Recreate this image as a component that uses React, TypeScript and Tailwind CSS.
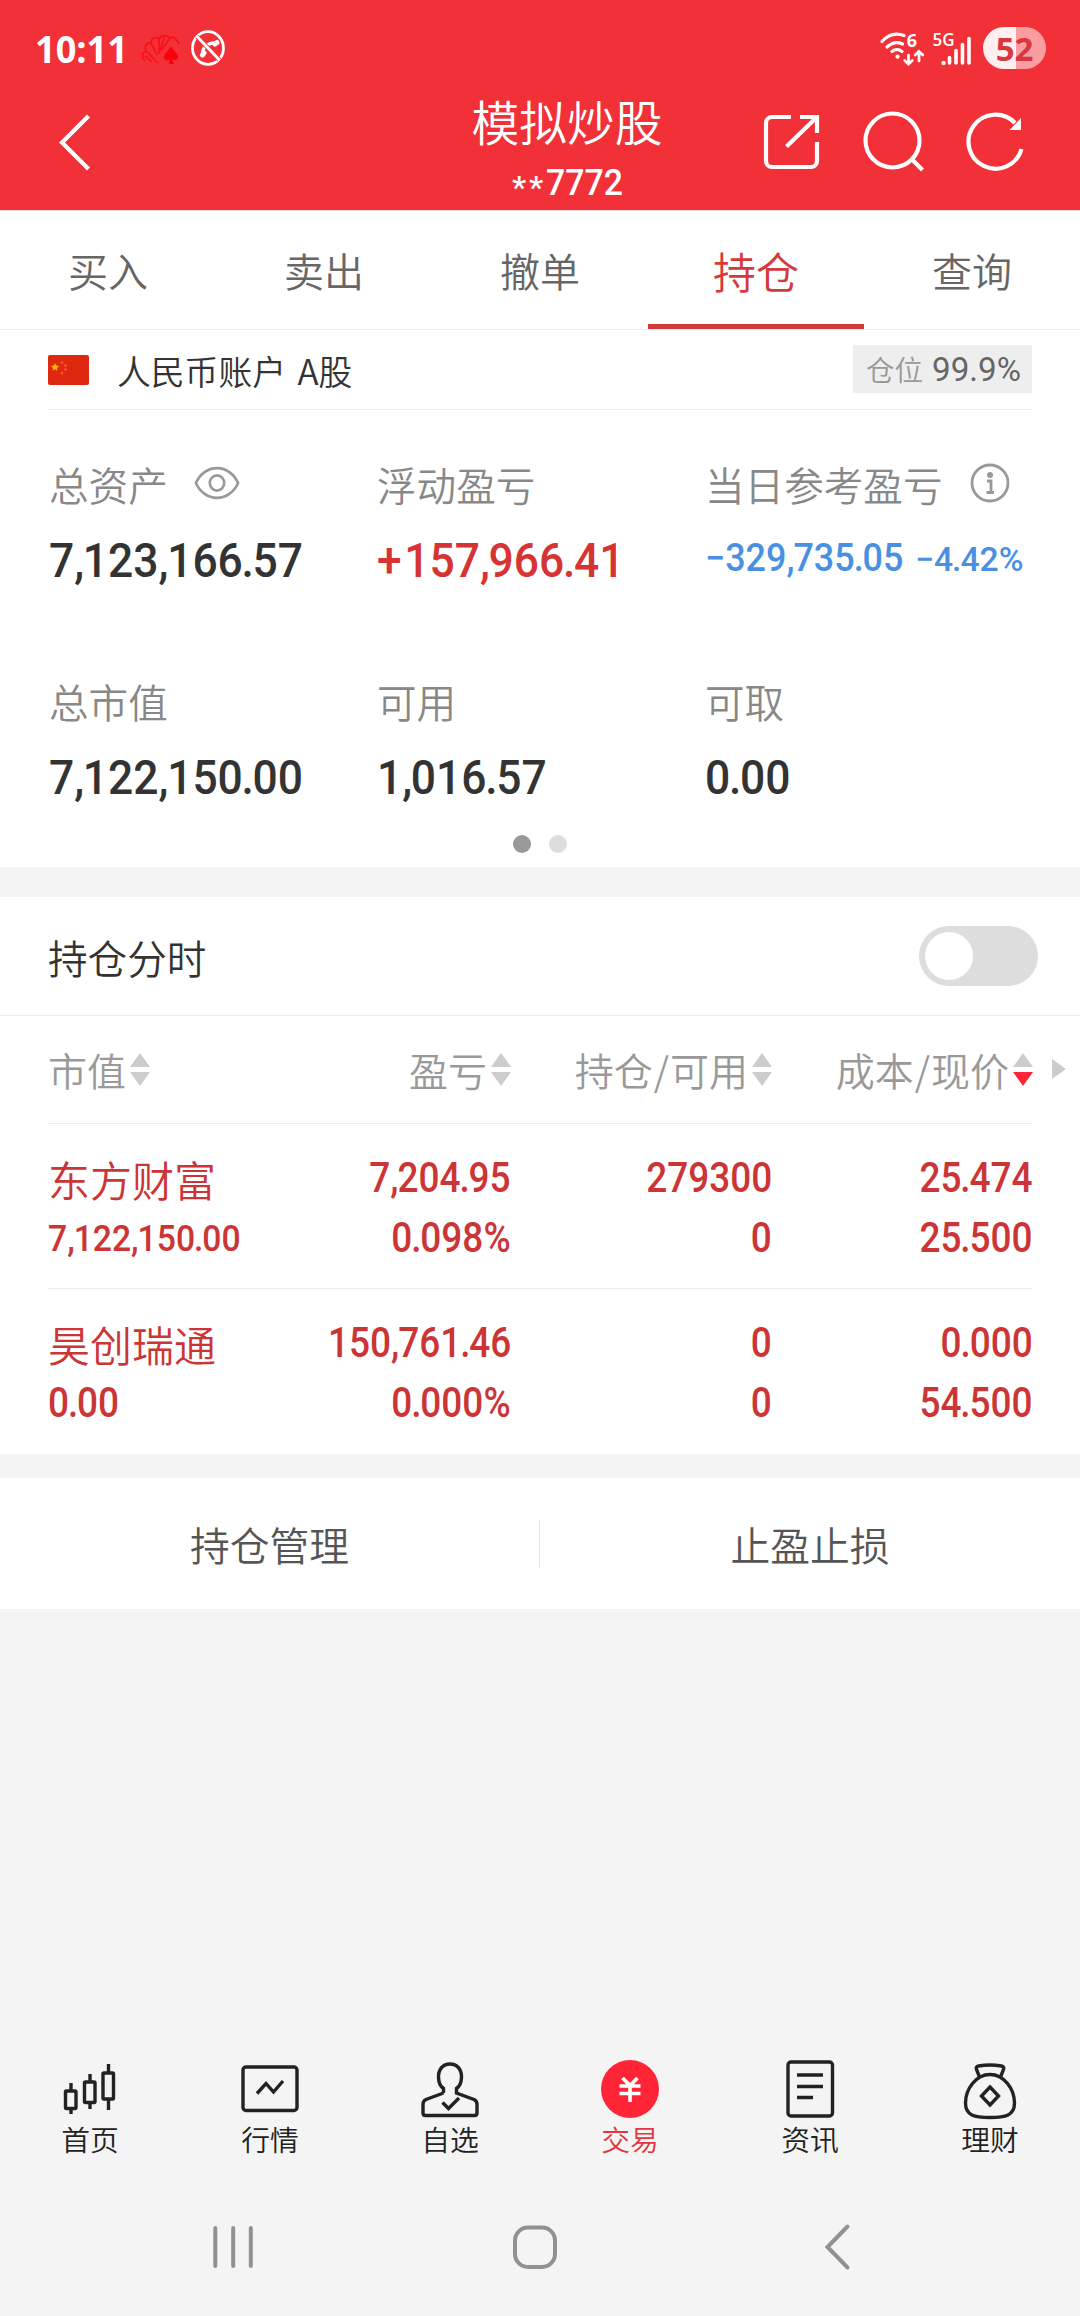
import React from 'react';

const cjk = "font-['Noto_Sans_CJK_SC',sans-serif] font-[350]";

type NumProps = { text: string; className?: string };

/* Figures with tightened separators. */
function Figures({ text }: { text: string }) {
  return (
    <>
      {text.split('').map((c, i) =>
        c === ',' ? <span key={i} className="mr-[-0.03em]">,</span>
        : c === '.' ? <span key={i} className="ml-[-0.03em] mr-[-0.03em]">.</span>
        : c === '+' ? <span key={i} className="mr-[0.06em]">+</span>
        : c,
      )}
    </>
  );
}

/* Condensed figures, anchored to the left or right edge of their cell. */
function NumL({ text, className = '' }: NumProps) {
  return <span className={`block w-max origin-left whitespace-nowrap font-['Roboto',sans-serif] font-medium ${className}`}><Figures text={text} /></span>;
}
function NumR({ text, className = '' }: NumProps) {
  return <span className={`ml-auto block w-max origin-right scale-x-[0.88] whitespace-nowrap font-['Roboto',sans-serif] text-[42px] font-medium leading-[60px] ${className}`}><Figures text={text} /></span>;
}

function StatusBar() {
  return (
    <div className="flex h-[96px] items-center justify-between pl-[35px] pr-[34px]">
      <div className="flex items-center">
        <div className="w-[107px]">
          <span className="block w-max origin-left scale-x-[0.95] whitespace-nowrap font-['Open_Sans',sans-serif] text-[38px] font-bold leading-none text-white">10:11</span>
        </div>
        <svg className="h-[36px] w-[40px]" viewBox="0 0 40 36" fill="none" stroke="#fb0d14" strokeWidth="1.600">
          <path d="M3 31C-1 27 0 22 4 21C2 16 5 12 9 13C9 8 13 6 17 9C19 5 25 5 28 8C31 6 35 9 37 14" />
          <path d="M4 21l12 12M3 26l7 6M9 13l6 12M17 9l0 15M28 8l-8 12M22 8l-4 13" />
          <path d="M29 16c-3 6-8 8-7 12 1 3 5 3 6 1l-1 5h5l-2-5c2 2 6 1 6-2 0-4-5-6-7-11z" fill="#fb0008" stroke="none" />
        </svg>
        <svg className="ml-[9px] h-[36px] w-[34px]" viewBox="0 0 34 36" fill="none" stroke="#fff">
          <ellipse cx="17" cy="18" rx="15.500" ry="16.300" strokeWidth="2.800" />
          <path d="M11.500 25C11 17.500 17 12 26 13" strokeWidth="3.400" />
          <path d="M11.500 25l1.500-2M24 14l2-1.500" strokeWidth="5" strokeLinecap="round" />
          <path d="M6 6.500l22.500 23.500" stroke="#f13038" strokeWidth="4.600" />
          <path d="M6 6.500l22.500 23.500" strokeWidth="2.800" />
        </svg>
      </div>
      <div className="flex items-center">
        <svg className="h-[36px] w-[96px] overflow-visible" viewBox="0 0 96 36" fill="none" stroke="#fff" strokeWidth="3.200" strokeLinecap="round">
          <path d="M4 11.500c6-7 14-9 22-6M9 17c5-4.500 10-5.500 15.500-3M14 21.500c3-2.500 7-2.500 10 0" />
          <circle cx="19.500" cy="26.700" r="2.100" fill="#fff" stroke="none" />
          <path d="M30.500 25v9m-3.800-3.500l3.800 3.700 3.800-3.700M41 31v-9m-3.800 3l3.800-3.700 3.800 3.700" strokeWidth="2.700" />
          <text x="28.800" y="16.800" fontSize="18" fontWeight="700" fontFamily="Open Sans" fill="#fff" stroke="none">6</text>
          <text x="54.500" y="15.800" fontSize="18" fontWeight="600" fontFamily="Open Sans" fill="#fff" stroke="none" textLength="22" lengthAdjust="spacingAndGlyphs">5G</text>
          <circle cx="65.500" cy="33" r="2.200" fill="#fff" stroke="none" />
          <path d="M71.500 27.500v5.500M78 20.500v12.500M84.500 14.500v18.500M91 8.500v24.500" strokeWidth="3.600" />
        </svg>
        <div className="ml-[9px] flex h-[42px] w-[63px] items-center justify-center rounded-full bg-gradient-to-r from-[#ffeff0] from-[52%] to-[#f99da1] to-[52%]">
          <span className="font-['Open_Sans',sans-serif] text-[33px] font-bold leading-none text-[#da363d]">52</span>
        </div>
      </div>
    </div>
  );
}

function TitleBar() {
  return (
    <div className="grid h-[114px] grid-cols-[400px_1fr_400px] text-white">
      <svg className="ml-[58px] mt-[18px] h-[58px] w-[34px]" viewBox="0 0 34 58" fill="none" stroke="#fff" strokeWidth="4.200">
        <path d="M30.500 2L4 28.500l26.500 26.500" />
      </svg>
      <div className="flex flex-col items-center">
        <div className={`${cjk} whitespace-nowrap pl-[54px] text-[47.800px] leading-[49px]`}>模拟炒股</div>
        <div className="flex h-[64px] w-full items-center justify-center pl-[60px] pt-[12px] font-['Roboto',sans-serif] text-[36px] font-medium leading-[48px]">
          <span className="mt-[7px] text-[32px] tracking-[3px]">**</span>
          <span className="origin-left scale-x-[0.94]">7772</span>
        </div>
      </div>
      <svg className="ml-[63px] mt-[14px] h-[64px] w-[290px]" viewBox="744 110 290 64" fill="none" stroke="#fff" strokeWidth="4.200">
        <path d="M792 117h-19a6 6 0 0 0-6 6v38a6 6 0 0 0 6 6h39a6 6 0 0 0 6-6v-19" />
        <path d="M801 117h17v16M817 118l-29.500 28.500" />
        <circle cx="893.500" cy="140.500" r="27" />
        <path d="M912.500 159l11 11" />
        <path d="M1022.500 149A27 27 0 1 1 1016 123" />
        <path d="M1022 118v12h-11.500z" fill="#fff" stroke="none" />
      </svg>
    </div>
  );
}

const tabs = ['买入', '卖出', '撤单', '持仓', '查询'];

function Tabs() {
  return (
    <nav className={`${cjk} grid h-[120px] grid-cols-5 border-b border-[#ececec] border-t border-t-[#ffe2e5] bg-white`}>
      {tabs.map((t) =>
        t === '持仓' ? (
          <div key={t} className="flex justify-center border-b-[5px] border-[#d53a3a] pt-[29px] text-[43px] leading-[60px] text-[#d53a3a]">{t}</div>
        ) : (
          <div key={t} className="flex justify-center pt-[29px] text-[40px] leading-[60px] text-[#666]">{t}</div>
        ),
      )}
    </nav>
  );
}

function Eye() {
  return (
    <svg className="ml-[26px] mt-[-3px] h-[36px] w-[46px]" viewBox="0 0 48 36" fill="none" stroke="#999" strokeWidth="2.800">
      <path d="M2 18C6 9 14 2.500 24 2.500S42 9 46 18C42 27 34 33.500 24 33.500S6 27 2 18z" />
      <ellipse cx="24" cy="18" rx="7.500" ry="8" />
    </svg>
  );
}
function Info() {
  return (
    <svg className="ml-[28px] mt-[-3px] h-[40px] w-[40px]" viewBox="0 0 40 40" fill="none" stroke="#999" strokeWidth="2.800">
      <circle cx="20" cy="20" r="18" />
      <circle cx="20" cy="12" r="3" fill="#999" stroke="none" />
      <path d="M17 18h4v11M16.500 29.500h7.500" />
    </svg>
  );
}

function Metric({ label, icon, children }: { label: string; icon?: React.ReactNode; children: React.ReactNode }) {
  return (
    <div className="h-[217px]">
      <div className={`${cjk} flex h-[60px] items-center whitespace-nowrap text-[39.600px] leading-[60px] text-[#888]`}>
        {label}
        {icon}
      </div>
      <div className="mt-[17px] flex h-[60px] items-center">{children}</div>
    </div>
  );
}

const big = 'scale-x-[0.925] text-[48px] leading-[60px]';

function Account() {
  return (
    <section className="h-[537px] bg-white">
      <div className="mx-[48px] flex h-[80px] items-center border-b border-[#ececec]">
        <svg className="h-[30px] w-[41px]" viewBox="0 0 41 30">
          <rect width="41" height="30" rx="2" fill="#de2910" />
          <path d="M7 8l1.200 2.600 2.800.3-2.100 2 .6 2.800L7 14.300l-2.500 1.400.6-2.800-2.100-2 2.800-.3z" fill="#ffb400" />
          <g fill="#ee6a1c">
            <circle cx="14" cy="7.500" r="1.200" />
            <circle cx="17.500" cy="10.500" r="1.200" />
            <circle cx="17.500" cy="14.500" r="1.200" />
            <circle cx="14" cy="18" r="1.200" />
          </g>
        </svg>
        <div className={`${cjk} ml-[28px] mt-[2px] text-[33.800px] text-[#333] [word-spacing:4px]`}>
          人民币账户 <span className="text-[35px]">A</span>股
        </div>
        <div className={`${cjk} ml-auto mt-[-2px] flex h-[48px] w-[179px] items-center justify-center bg-[#eee] pt-[2px] text-[28.500px] text-[#999]`}>
          仓位<span className="ml-[9px] origin-left scale-x-[1.02] pt-[1px] font-['Roboto',sans-serif] text-[32.500px] font-normal text-[#666]">99.9%</span>
        </div>
      </div>
      <div className="ml-[49px] mt-[44px] grid grid-cols-[328px_328px_1fr]">
        <Metric label="总资产" icon={<Eye />}><NumL text="7,123,166.57" className={`${big} text-[#333]`} /></Metric>
        <Metric label="浮动盈亏"><NumL text="+157,966.41" className={`${big} text-[#d63333]`} /></Metric>
        <Metric label="当日参考盈亏" icon={<Info />}>
          <div className="mt-[-5px] flex items-baseline text-[#4a90e2]">
            <NumL text="−329,735.05" className="w-[211px] scale-x-[0.945] text-[38px]" />
            <NumL text="−4.42%" className="scale-x-[0.99] text-[34px]" />
          </div>
        </Metric>
        <Metric label="总市值"><NumL text="7,122,150.00" className={`${big} text-[#333]`} /></Metric>
        <Metric label="可用"><NumL text="1,016.57" className={`${big} text-[#333]`} /></Metric>
        <Metric label="可取"><NumL text="0.00" className={`${big} text-[#333]`} /></Metric>
      </div>
      <div className="mt-[-53px] flex justify-center gap-[18px]">
        <i className="size-[18px] rounded-full bg-[#999]" />
        <i className="size-[18px] rounded-full bg-[#ddd]" />
      </div>
    </section>
  );
}

function Sort({ active = false }: { active?: boolean }) {
  return (
    <svg className="ml-[4px] h-[34px] w-[20px] shrink-0" viewBox="0 0 20 34">
      <path d="M10 0l10 14H0z" fill="#ccc" />
      <path d="M10 33L0 19h20z" fill={active ? '#ff2436' : '#ccc'} />
    </svg>
  );
}

const rows = [
  { name: '东方财富', value: '7,122,150.00', pl: ['7,204.95', '0.098%'], qty: ['279300', '0'], price: ['25.474', '25.500'] },
  { name: '昊创瑞通', value: '0.00', pl: ['150,761.46', '0.000%'], qty: ['0', '0'], price: ['0.000', '54.500'] },
];

function Holdings() {
  return (
    <section className={`${cjk} mt-[30px] h-[557px] bg-white`}>
      <div className="flex h-[119px] items-center justify-between border-b border-[#ececec] pl-[48px] pr-[42px]">
        <span className="mt-[2px] text-[39.600px] text-[#333]">持仓分时</span>
        <div className="flex h-[60px] w-[119px] items-center rounded-full bg-[#ddd] pl-[6px]">
          <div className="size-[48px] rounded-full bg-white" />
        </div>
      </div>
      <div className="relative mx-[48px] grid h-[108px] grid-cols-[203px_260px_261px_261px] items-center border-b border-[#ececec] text-[39px] text-[#999]">
        <div className="flex items-center">市值<Sort /></div>
        <div className="flex items-center justify-end">盈亏<Sort /></div>
        <div className="flex items-center justify-end whitespace-nowrap">持仓<span className="mx-[1px]">/</span>可用<Sort /></div>
        <div className="flex items-center justify-end whitespace-nowrap">成本<span className="mx-[1px]">/</span>现价<Sort active /></div>
        <svg className="absolute right-[-34px] top-[43px] h-[20px] w-[14px]" viewBox="0 0 14 20">
          <path d="M0 0l14 10L0 20z" fill="#ccc" />
        </svg>
      </div>
      {rows.map((r, i) => (
        <div key={r.name} className={`mx-[48px] grid h-[165px] grid-cols-[203px_260px_261px_261px] pt-[24px] text-[#cc3535] ${i === 0 ? 'border-b border-[#ececec]' : ''}`}>
          <div>
            <div className="mt-[1px] whitespace-nowrap text-[42px] leading-[60px]">{r.name}</div>
            {i === 0 ? <NumL text={r.value} className="scale-x-[0.91] text-[37px] leading-[60px]" /> : <NumL text={r.value} className="mt-[-1px] scale-x-[0.88] text-[42px] leading-[60px]" />}
          </div>
          {[r.pl, r.qty, r.price].map((c, j) => (
            <div key={j}>
              <NumR text={c[0]} />
              <NumR text={c[1]} />
            </div>
          ))}
        </div>
      ))}
    </section>
  );
}

function Actions() {
  return (
    <section className={`${cjk} mt-[24px] grid h-[131px] grid-cols-2 items-center bg-white text-center text-[39.800px] text-[#555]`}>
      <div className="border-r border-[#e4e4e4] leading-[48px]">持仓管理</div>
      <div className="leading-[48px]">止盈止损</div>
    </section>
  );
}

const icons: Record<string, React.ReactNode> = {
  首页: (
    <>
      <rect x="5.500" y="31" width="10.500" height="17.500" rx="1" />
      <rect x="24.500" y="22" width="10.500" height="20.500" rx="1" />
      <rect x="43" y="13" width="10.500" height="26" rx="1" />
      <path d="M11 23v8M11 49v5M30 14v8M30 43v6M48.500 4v9M48.500 39v11" />
    </>
  ),
  行情: (
    <>
      <rect x="3" y="7" width="54" height="43.500" rx="3" />
      <path d="M17 33.500l9-10 7.500 8.500L43 21" />
    </>
  ),
  自选: (
    <>
      <path d="M23.500 33L6 39.500Q3 41 3 44v9q0 2.500 2.500 2.500h49q2.500 0 2.500-2.500v-9q0-3-3-4.500L36.500 33v-4.500q5-3.500 5-11.500C41.500 9 37 4 30 4S18.500 9 18.500 17q0 8 5 11.500V33" />
      <path d="M22.500 42.500l6 6L39 38" />
    </>
  ),
  交易: (
    <>
      <circle cx="30" cy="29" r="29" fill="#ff2436" stroke="none" />
      <path d="M22.500 18l7.500 7.500L37.500 18M19.500 26h21M19.500 33.500h21M30 25v17" stroke="#fff" strokeWidth="3.600" />
    </>
  ),
  资讯: (
    <>
      <rect x="8" y="2" width="44.500" height="54" rx="3" />
      <path d="M17 15h26M17 26.500h26M17 37.500h16" />
    </>
  ),
  理财: (
    <>
      <path d="M19.500 17L16.500 9.500q-1-3 2-3.500 11.500-2 23 0 3 .5 2 3.500L40.500 17" />
      <path d="M30 14.500C16 14.500 5.500 29 5.500 43c0 12.500 9 14.500 24.500 14.500S54.500 55.500 54.500 43C54.500 29 44 14.500 30 14.500z" />
      <path d="M30 27l8.500 9-8.500 9-8.500-9z" />
    </>
  ),
};

function BottomNav() {
  return (
    <nav className={`${cjk} mt-[451px] grid grid-cols-6`}>
      {Object.keys(icons).map((k) => (
        <div key={k} className={`flex flex-col items-center ${k === '交易' ? 'text-[#e23743]' : 'text-[#222]'}`}>
          <svg className="h-[60px] w-[60px]" viewBox="0 0 60 60" fill="none" stroke="#222" strokeWidth="3.400">{icons[k]}</svg>
          <div className="mt-[-1px] text-[28.800px] leading-[40px]">{k}</div>
        </div>
      ))}
    </nav>
  );
}

function SystemNav() {
  return (
    <div className="mt-[63px] flex h-[50px] pl-[211px]">
      <svg className="h-[50px] w-[642px]" viewBox="211 2222 642 50" fill="none" stroke="#919191" strokeWidth="4" strokeLinecap="round">
        <path d="M215.300 2228v38M233.200 2228v38M250.800 2228v38" />
        <rect x="515" y="2227.500" width="40" height="39.500" rx="13" />
        <path d="M847.500 2226.500L827.500 2247l20 20.500" />
      </svg>
    </div>
  );
}

export default function App() {
  return (
    <div className="h-[2316px] w-[1080px] overflow-hidden bg-[#f4f4f4]">
      <header className="h-[210px] bg-[#f13038]">
        <StatusBar />
        <TitleBar />
      </header>
      <Tabs />
      <Account />
      <Holdings />
      <Actions />
      <BottomNav />
      <SystemNav />
    </div>
  );
}
